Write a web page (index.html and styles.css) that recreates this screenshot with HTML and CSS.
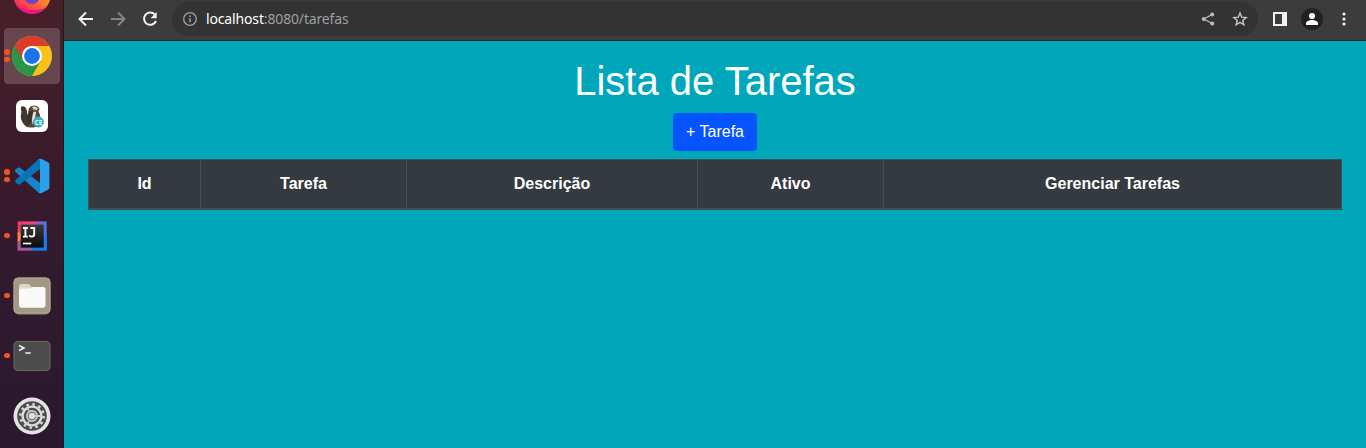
FILE: index.html
```html
<!DOCTYPE html>
<html lang="pt-BR">
<head>
<meta charset="utf-8">
<title>Lista de Tarefas</title>
<link rel="stylesheet" href="styles.css">
</head>
<body>
<div class="desktop">
  <nav class="dock">
    <div class="dock-item">
      <svg class="app" viewBox="0 0 40 40" width="40" height="40">
        <defs>
          <linearGradient id="fx" x1="1" y1="0" x2="0.2" y2="1"><stop offset="0" stop-color="#ffd83a"/><stop offset=".45" stop-color="#ff8b26"/><stop offset=".75" stop-color="#ff4a45"/><stop offset="1" stop-color="#f5156c"/></linearGradient>
        </defs>
        <circle cx="20" cy="19.500" r="18.500" fill="url(#fx)"/>
        <path d="M4 29a18.500 18.500 0 0 0 30 2c-9 5-21 4-30-2z" fill="#ec1580"/>
        <circle cx="20" cy="20" r="8" fill="#6a45c4"/>
      </svg>
    </div>
    <div class="dock-item">
      <span class="dots"><i></i><i></i></span>
      <div class="tile-active">
        <svg class="app" viewBox="0 0 40 40" width="40" height="40">
          <circle cx="20" cy="20" r="20" fill="#fbc116"/>
          <path d="M20 20L2.700 10A20 20 0 0 0 20 40l8.700-15z" fill="#2a9447"/>
          <path d="M2.700 10A20 20 0 0 1 37.320 10H20a10 10 0 0 0-8.700 15z" fill="#dd3b2c"/>
          <circle cx="20" cy="20" r="10" fill="#fff"/>
          <circle cx="20" cy="20" r="7.900" fill="#1a73e8"/>
        </svg>
      </div>
    </div>
    <div class="dock-item">
      <svg class="app" viewBox="0 0 34 34" width="34" height="34">
        <rect x="1" y="1" width="32" height="32" rx="6" fill="#fff"/>
        <path d="M6.500 7.500C9 6.500 11.500 8.500 11.700 11.500L13 18l2.500 7.500-2.500 3C8.500 26.500 5.500 21 5.800 17c.1-2 1-3 .6-5-.8-1.700-.8-3.500.1-4.500z" fill="#41372f"/>
        <path d="M13.500 13c-.5-3.500 1.500-6.500 5.500-6.500 3 0 4.500 1.500 5.500 3.500l-1 2.500c2.200 3.500 2.500 8 1 14l-6 2h-4.500c-1.500-3 1-5 .5-8z" fill="#5c483c"/>
        <path d="M14 12l-2.500 7 3.500 7 2-8 2-6z" fill="#3a2f29"/>
        <path d="M17 8c2-1 4-.5 6 1.500l-1.500 1.700-3-.7z" fill="#d9d2c8"/>
        <path d="M18.500 12.500l2.500.5-.8 6c-1.700 2-2.200 5-2.200 7-2-5-.5-9.500.5-13.500z" fill="#e6e0d8"/>
        <circle cx="23.500" cy="23" r="5.400" fill="#37aeb9"/>
        <text x="23.500" y="25.500" class="ce">CE</text>
      </svg>
    </div>
    <div class="dock-item">
      <span class="dots"><i></i><i></i></span>
      <svg class="app" viewBox="0 0 36 36" width="36" height="36">
        <path d="M1.500 11.500L4 9.700q1-.6 2 .1L34 31l-7 4q-1.500.6-3-.8L1.600 14q-1.400-1.300-.1-2.500z" fill="#1686cc"/>
        <path d="M1.500 24.500L4 26.300q1 .6 2-.1L34 5l-7-4q-1.500-.6-3 .8L1.600 22q-1.400 1.300-.1 2.500z" fill="#0875b7"/>
        <path d="M24 1.800Q25.500.2 27.500 1L34 4.200Q35.400 5 35.400 6.500v23q0 1.500-1.400 2.300L27.500 35q-2 .8-3.500-.8 2 1 2-1.500V3.300q0-2.500-2-1.500z" fill="#2ba1ee"/>
      </svg>
    </div>
    <div class="dock-item">
      <span class="dots"><i></i></span>
      <svg class="app" viewBox="0 0 30 30" width="30" height="30">
        <defs>
          <linearGradient id="ij" x1="0" y1="0" x2="1" y2="0.500"><stop offset="0" stop-color="#fe315d"/><stop offset=".45" stop-color="#e4498a"/><stop offset=".75" stop-color="#4f72e4"/><stop offset="1" stop-color="#3d7ce8"/></linearGradient>
          <linearGradient id="ink" x1="0" y1="0" x2="0" y2="1"><stop offset="0" stop-color="#3a3a3a"/><stop offset="1" stop-color="#0b0b0b"/></linearGradient>
        </defs>
        <path d="M.700.400h29v29H.7z" fill="url(#ij)"/>
        <path d="M.700 11l5 2v6l-5 2z" fill="#f98b2e"/>
        <path d="M.700 21l6-3 8 11.400h-14z" fill="#a9559f"/>
        <path d="M13 25h16.700v4.400H16z" fill="#1479ee"/>
        <path d="M26 18l3.700-4v14H25z" fill="#0f7cf5"/>
        <rect x="3.700" y="3.600" width="23" height="23" fill="url(#ink)"/>
        <path d="M6 7h4.800M6 15.600h4.800M8.400 7v8.600M13.500 7h3.700v6q0 2.600-2.400 2.600-1.500 0-2.600-1.200" fill="none" stroke="#fff" stroke-width="1.900"/>
        <path d="M6 22.500h8.300" stroke="#fff" stroke-width="1.700"/>
      </svg>
    </div>
    <div class="dock-item">
      <span class="dots"><i></i></span>
      <svg class="app" viewBox="0 0 38 38" width="38" height="38">
        <rect x=".5" y=".5" width="37" height="37" rx="5" fill="#918a78"/>
        <rect x="1" y="1" width="36" height="35" rx="4" fill="#a19986" stroke="#aea797"/>
        <path d="M6 11V9.500Q6 7 8.500 7H15q1.200 0 2 1l2 3h11v4H6z" fill="#ddd6c9"/>
        <path d="M6 13.500Q6 11.500 8 11.500h9l2-1.500h11q2.500 0 2.500 2.500V28q0 2.700-2.700 2.700H8.700Q6 30.700 6 28z" fill="#faf9f7"/>
      </svg>
    </div>
    <div class="dock-item">
      <span class="dots"><i></i></span>
      <svg class="app" viewBox="0 0 38 32" width="38" height="32">
        <rect x="1" y="1.500" width="36" height="29" rx="3.500" fill="#4c4c4c" stroke="#696969"/>
        <path d="M6 5.500l5 2.500-5 2.500M12.300 13h5.400" fill="none" stroke="#f2f2f2" stroke-width="1.500"/>
      </svg>
    </div>
    <div class="dock-item">
      <svg class="app" viewBox="0 0 38 38" width="38" height="38">
        <circle cx="19" cy="19" r="18.500" fill="#e4e4e2"/>
        <circle cx="19" cy="19" r="14.800" fill="#4d4d4b"/>
        <circle cx="19" cy="19" r="11.600" fill="none" stroke="#d8d8d6" stroke-width="2.600" stroke-dasharray="2.500 3.574"/>
        <circle cx="19" cy="19" r="9.400" fill="none" stroke="#dcdcda" stroke-width="2.400"/>
        <circle cx="19" cy="19" r="5" fill="none" stroke="#c9c9c7" stroke-width="2"/>
        <path d="M19 19h9M16 13.800l-1.500-2.600M16 24.200l-1.500 2.600" stroke="#c9c9c7" stroke-width="1.800"/>
        <circle cx="19" cy="19" r="3.300" fill="#dededc"/>
      </svg>
    </div>
  </nav>
  <div class="browser">
    <header class="toolbar">
      <div class="nav-buttons">
        <svg viewBox="0 0 16 16" width="16" height="16"><path d="M15 8H2M8 1.500L1.500 8 8 14.500" fill="none" stroke="#f1f1f1" stroke-width="2"/></svg>
        <svg viewBox="0 0 16 16" width="16" height="16"><path d="M1 8h13M8 1.500L14.500 8 8 14.500" fill="none" stroke="#858585" stroke-width="2"/></svg>
        <svg viewBox="0 0 16 16" width="16" height="16"><path d="M12.700 3.300A6.200 6.200 0 1 0 14 10" fill="none" stroke="#f1f1f1" stroke-width="2"/><path d="M14.700 1v6.200H8.500z" fill="#f1f1f1"/></svg>
      </div>
      <div class="omnibox">
        <svg viewBox="0 0 14 14" width="14" height="14"><circle cx="7" cy="7" r="6.300" fill="none" stroke="#9fa2a5" stroke-width="1.300"/><path d="M7 6.200v4M7 3.400v1.500" stroke="#9fa2a5" stroke-width="1.500"/></svg>
        <span class="url"><span class="host">localhost</span>:8080/tarefas</span>
        <svg class="share" viewBox="0 0 14 14" width="14" height="14"><path d="M11.200 2.500L2.700 7l8.500 4.500" fill="none" stroke="#bcbcbc" stroke-width="1.300"/><circle cx="11.200" cy="2.600" r="2" fill="#bcbcbc"/><circle cx="2.700" cy="7" r="2" fill="#bcbcbc"/><circle cx="11.200" cy="11.400" r="2" fill="#bcbcbc"/></svg>
        <svg class="star" viewBox="0 0 16 16" width="16" height="16"><path d="M8 2l1.700 4.200 4.500.3-3.500 2.900 1.200 4.400L8 11.400l-3.900 2.400 1.200-4.400-3.500-2.900 4.500-.3z" fill="none" stroke="#c4c4c4" stroke-width="1.400"/></svg>
      </div>
      <svg class="panel" viewBox="0 0 14 14" width="14" height="14"><path d="M0 0h14v14H0z" fill="#f1f1f1"/><path d="M2 2h7v10H2z" fill="#3c3c3c"/></svg>
      <svg class="avatar" viewBox="0 0 22 22" width="22" height="22"><circle cx="11" cy="11" r="11" fill="#202124"/><circle cx="11" cy="8" r="3" fill="#fff"/><path d="M5 17v-1.700C5 13.300 8.500 12 11 12s6 1.300 6 3.300V17z" fill="#fff"/></svg>
      <svg class="more" viewBox="0 0 4 14" width="4" height="14"><g fill="#f1f1f1"><circle cx="2" cy="2" r="1.600"/><circle cx="2" cy="7" r="1.600"/><circle cx="2" cy="12" r="1.600"/></g></svg>
    </header>
    <main class="page">
      <h1>Lista de Tarefas</h1>
      <button class="btn" type="button">+ Tarefa</button>
      <div class="task-table" role="row">
        <span role="columnheader">Id</span>
        <span role="columnheader">Tarefa</span>
        <span role="columnheader">Descrição</span>
        <span role="columnheader">Ativo</span>
        <span role="columnheader">Gerenciar Tarefas</span>
      </div>
    </main>
  </div>
</div>
</body>
</html>
```

FILE: styles.css
```css
* { box-sizing: border-box; }
body { margin: 0; font-family: "Liberation Sans", Arial, sans-serif; font-size: 16px; }
svg { display: block; flex: none; }
.desktop { display: flex; height: 448px; overflow: hidden; }
.dock {
  width: 64px;
  flex: none;
  padding-right: 1px;
  border-right: 1px solid #241720;
  background: linear-gradient(#471f29, #3b1b2a 35%, #321a2e 60%, #2a182e);
}
.dock-item { position: relative; height: 60px; display: flex; align-items: center; justify-content: center; padding-left: 2px; }
.dock-item:first-child { margin-top: -34px; }
.tile-active { width: 56px; height: 56px; border-radius: 4px; background: #66464f; display: grid; place-items: center; }
.dots { position: absolute; left: 4px; top: 0; height: 59px; display: flex; flex-direction: column; justify-content: center; gap: 2px; }
.dots i { width: 5.500px; height: 5.500px; border-radius: 50%; background: #f05423; }
.ce { font: 700 6.5px "Open Sans", sans-serif; fill: #e5fafa; text-anchor: middle; }
.browser { flex: 1; display: flex; flex-direction: column; }
.toolbar { height: 41px; display: flex; align-items: center; padding: 0 20px 3px 14px; background: #3c3c3c; border-bottom: 1px solid #252525; }
.nav-buttons { display: flex; gap: 16px; margin-right: 14px; }
.omnibox { flex: 1; height: 34px; margin-top: 1px; border-radius: 17px; background: #333; display: flex; align-items: center; padding: 0 10px 0 11px; }
.url { margin-left: 9px; font: 14px/20px "Noto Sans", sans-serif; letter-spacing: -0.15px; color: #9aa0a6; white-space: nowrap; }
.host { color: #fff; }
.share { margin-left: auto; margin-right: 17px; }
.panel { margin-left: 15px; }
.avatar { margin-left: 14px; }
.more { margin-left: 19px; }
.page { flex: 1; display: flex; flex-direction: column; align-items: center; padding: 16px 24px; background: #00a7bb; }
h1 { margin: 0 0 8px; font-size: 40px; font-weight: 400; line-height: 48px; color: #fff; }
.btn { width: 84px; height: 38px; margin-bottom: 8px; padding: 0; border: 0; border-radius: 4px; background: #0654ff; color: #fff; font: inherit; line-height: 24px; }
.task-table {
  width: 100%;
  height: 51px;
  display: grid;
  grid-template-columns: 112px 206px 291px 186px 1fr;
  border: 1px solid #454d55;
  border-bottom-width: 2px;
  background: #343a40;
  color: #fff;
  font-weight: 700;
  line-height: 48px;
  text-align: center;
}
.task-table span { padding-right: 1px; }
.task-table span + span { border-left: 1px solid #454d55; margin-left: -1px; }
.task-table span:last-child { padding-right: 0; }
```
